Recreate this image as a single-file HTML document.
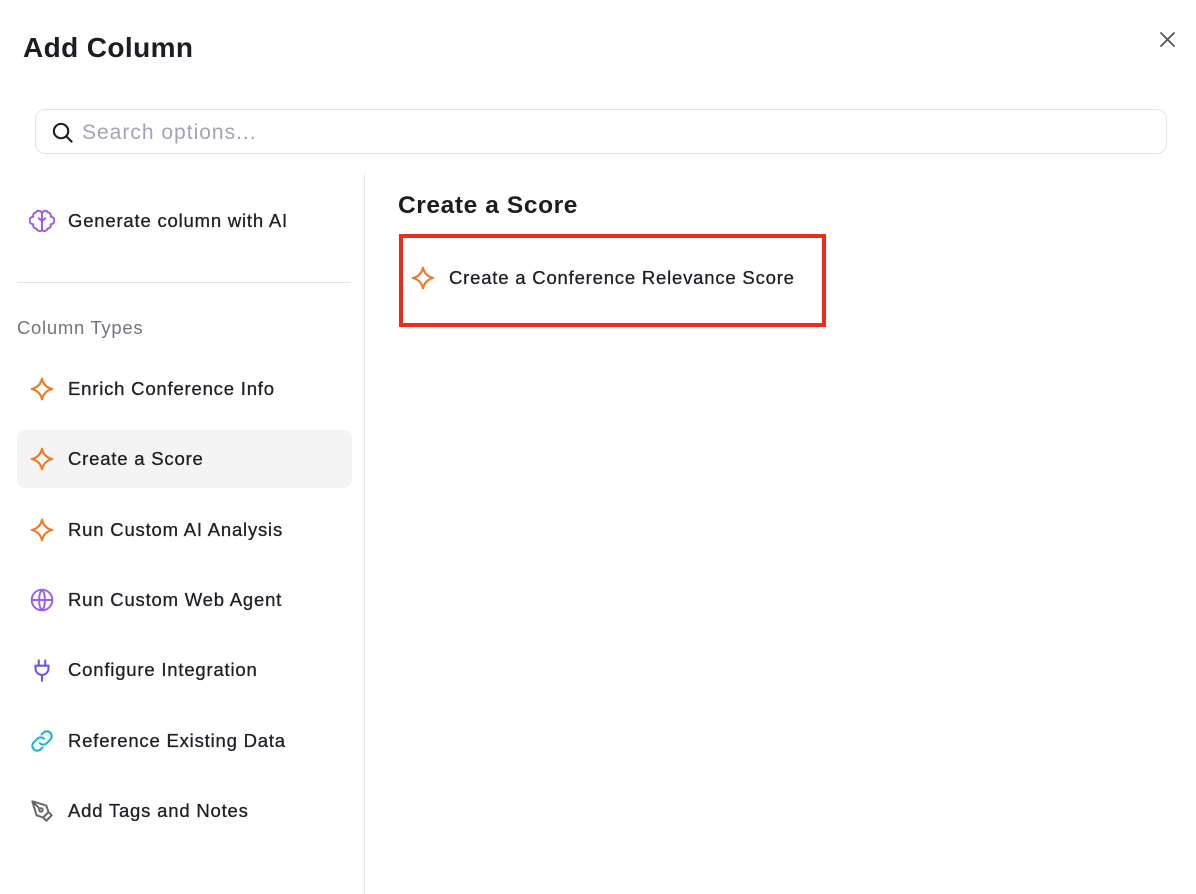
<!DOCTYPE html>
<html><head><meta charset="utf-8"><style>
*{box-sizing:border-box;margin:0;padding:0}
body{width:1196px;height:894px;background:#fff;font-family:"Liberation Sans",sans-serif;color:#1c1c22;position:relative;overflow:hidden}
.abs{position:absolute}
.item{position:absolute;left:17px;width:335px;height:57px;display:flex;align-items:center;font-size:18.5px;color:#1f1f26;letter-spacing:0.8px;-webkit-text-stroke:0.3px #1f1f26}
.item svg{position:absolute;left:12px}
.item span{position:absolute;left:51px}
</style></head><body>
<div class="abs" style="left:23px;top:32px;font-size:28px;font-weight:bold;letter-spacing:0.4px">Add Column</div>
<svg class="abs" style="left:1159px;top:31px" width="17" height="17" viewBox="0 0 17 17"><path d="M2 2L15 15M15 2L2 15" stroke="#555" stroke-width="1.8" stroke-linecap="round"/></svg>
<div class="abs" style="left:35px;top:109px;width:1132px;height:45px;border:1px solid #e4e4e7;border-radius:10px"></div>
<svg class="abs" style="left:51px;top:121px" width="23" height="23" viewBox="0 0 24 24" fill="none" stroke="#1c1c22" stroke-width="2.2" stroke-linecap="round"><circle cx="10.5" cy="10.5" r="7.5"/><path d="M16 16l5.5 5.5"/></svg>
<div class="abs" style="left:82px;top:121px;font-size:21px;color:#a6a2b4;letter-spacing:1px">Search options...</div>
<div class="abs" style="left:364px;top:173px;width:1px;height:721px;background:#e8e8ea"></div>
<div class="abs" style="left:17px;top:282px;width:334px;height:1px;background:#e4e4e7"></div>
<div class="abs" style="left:17px;top:317px;font-size:18.5px;color:#74747c;letter-spacing:0.7px">Column Types</div>
<div class="abs" style="left:17px;top:430px;width:335px;height:58px;background:#f4f4f5;border-radius:8px"></div>

<div class="item" style="top:192px"><svg width="26" height="26" viewBox="0 0 24 24" fill="none" stroke="#9b5de5" stroke-width="1.8" stroke-linejoin="round" stroke-linecap="round"><path d="M12 5a3 3 0 0 0-5.5-1A3 3 0 0 0 4 8a3.5 3.5 0 0 0 0 7 3 3 0 0 0 3 4 3 3 0 0 0 5 1.5z"/><path d="M12 5a3 3 0 0 1 5.5-1A3 3 0 0 1 20 8a3.5 3.5 0 0 1 0 7 3 3 0 0 1-3 4 3 3 0 0 1-5 1.5z"/><path d="M12 5v15.5M12 12l-3-2.5M12 12l3-2.5"/></svg><span>Generate column with AI</span></div>

<svg width="0" height="0" style="position:absolute"><defs><path id="sp" d="M12 2.5Q13.8 10.2 21.5 12Q13.8 13.8 12 21.5Q10.2 13.8 2.5 12Q10.2 10.2 12 2.5Z" fill="none" stroke="#f07a22" stroke-width="2" stroke-linejoin="round"/></defs></svg>

<div class="item" style="top:360px"><svg width="26" height="26" viewBox="0 0 24 24"><use href="#sp"/></svg><span>Enrich Conference Info</span></div>
<div class="item" style="top:430px"><svg width="26" height="26" viewBox="0 0 24 24"><use href="#sp"/></svg><span>Create a Score</span></div>
<div class="item" style="top:501px"><svg width="26" height="26" viewBox="0 0 24 24"><use href="#sp"/></svg><span>Run Custom AI Analysis</span></div>
<div class="item" style="top:571px"><svg width="26" height="26" viewBox="0 0 24 24" fill="none" stroke="#9b5de5" stroke-width="1.8"><circle cx="12" cy="12" r="9.5"/><path d="M2.5 12h19M12 2.5c-3.5 3-3.5 16 0 19M12 2.5c3.5 3 3.5 16 0 19"/></svg><span>Run Custom Web Agent</span></div>
<div class="item" style="top:641px"><svg width="26" height="26" viewBox="0 0 24 24" fill="none" stroke="#6a5ae0" stroke-width="1.9" stroke-linecap="round"><path d="M9 3v5M15 3v5M6 8h12v2.5a6 6 0 0 1-12 0V8zM12 16.5V22"/></svg><span>Configure Integration</span></div>
<div class="item" style="top:712px"><svg width="26" height="26" viewBox="0 0 24 24" fill="none" stroke="#1fb5c9" stroke-width="1.9" stroke-linecap="round"><path d="M10 14a4.5 4.5 0 0 0 6.4 0l3.2-3.2a4.5 4.5 0 0 0-6.4-6.4L11.5 6M14 10a4.5 4.5 0 0 0-6.4 0l-3.2 3.2a4.5 4.5 0 0 0 6.4 6.4l1.7-1.6"/></svg><span>Reference Existing Data</span></div>
<div class="item" style="top:782px"><svg width="26" height="26" viewBox="0 0 24 24" fill="none" stroke="#666" stroke-width="1.8" stroke-linejoin="round"><path d="M3 3l13 4 2 6-5 5-6-2L3 3zM3 3l7 7M18 13l3 3-5 5-3-3"/><circle cx="11" cy="11" r="1.6"/></svg><span>Add Tags and Notes</span></div>

<div class="abs" style="left:398px;top:192px;font-size:24.5px;font-weight:bold;letter-spacing:0.6px">Create a Score</div>
<div class="abs" style="left:399px;top:234px;width:427px;height:93px;border:4px solid #ea2e1a"></div>
<svg class="abs" style="left:410px;top:265px" width="26" height="26" viewBox="0 0 24 24"><use href="#sp"/></svg>
<div class="abs" style="left:449px;top:267px;font-size:18.5px;color:#1f1f26;letter-spacing:0.8px;-webkit-text-stroke:0.3px #1f1f26">Create a Conference Relevance Score</div>
</body></html>
